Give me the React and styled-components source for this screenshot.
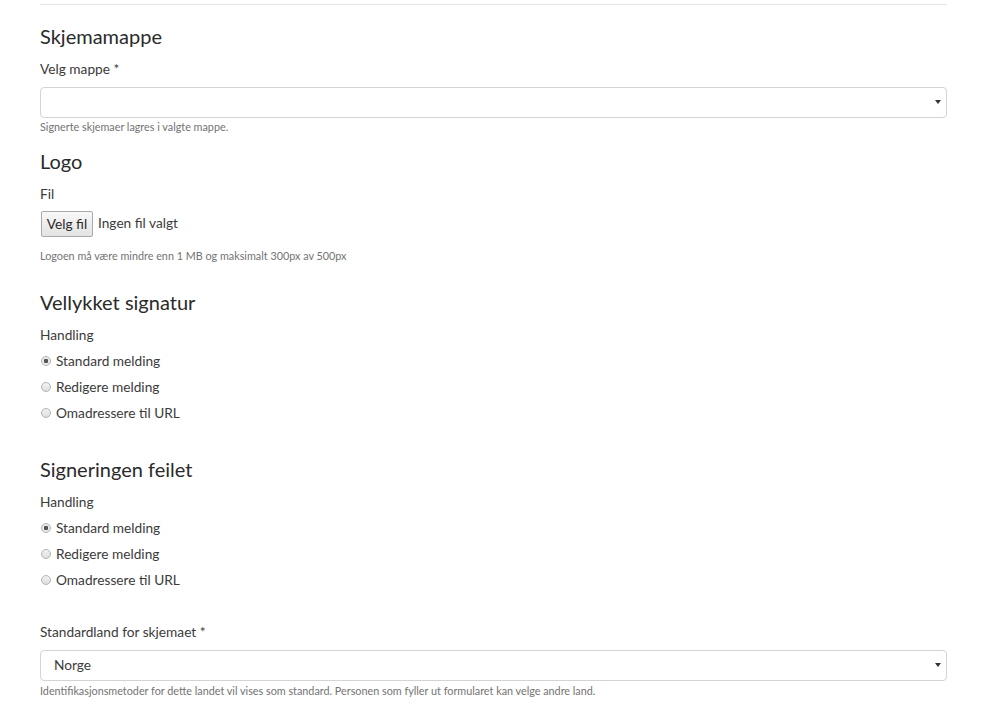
import React from 'react'
import styled, {createGlobalStyle} from 'styled-components'

const GlobalStyle = createGlobalStyle`
    body {
        margin: 0;
        background: #fff;
        font-family: Lato, "Open Sans", sans-serif;
        color: #3b3b3b;
    }
`

const Page = styled.div`
    margin: 0 52px 0 40px;
    padding-top: 4px;
`
const Rule = styled.hr`
    margin: 0;
    border: 0;
    border-top: 1px solid #e6e6e6;
`
const Section = styled.section`
    margin-top: ${props => props.top}px;
`
const Heading = styled.h2`
    margin: 0;
    padding-bottom: 2px;
    font-size: 20px;
    line-height: 22px;
    font-weight: 400;
    color: #2a2a2a;
`
const Label = styled.div`
    margin-top: ${props => props.top ?? 11}px;
    padding-bottom: 1px;
    font-size: 13.7px;
    line-height: 18px;
    color: #3b3b3b;
`
const SelectWrap = styled.div`
    position: relative;
    margin-top: 8px;
`
const Select = styled.div`
    box-sizing: border-box;
    height: 31px;
    border: 1px solid #d4d4d4;
    border-radius: 4px;
    padding: 0 13px;
    font-size: 13.7px;
    line-height: 28px;
    color: #3b3b3b;
`
const Arrow = styled.span`
    position: absolute;
    right: 6px;
    top: 13px;
    width: 0;
    height: 0;
    border-left: 3px solid transparent;
    border-right: 3px solid transparent;
    border-top: 4px solid #333;
`
const Help = styled.div`
    margin-top: ${props => props.top || 2}px;
    padding-bottom: 1px;
    font-size: 10.8px;
    line-height: 14px;
    color: #737373;
`
const FileRow = styled.div`
    display: flex;
    align-items: center;
    gap: 5px;
    height: 26px;
    margin-top: 7px;
    margin-left: 1px;
    font-size: 13.7px;
    line-height: 22px;
`
const FileButton = styled.button`
    box-sizing: border-box;
    height: 26px;
    width: 52px;
    padding: 0 0 2px;
    border: 1px solid #a9a9a9;
    border-radius: 2px;
    background: linear-gradient(#f8f8f8, #e3e3e3);
    font-family: inherit;
    font-size: 13.7px;
    color: #2a2a2a;
`
const Radios = styled.div`
    margin-top: 3px;
`
const RadioRow = styled.label`
    display: flex;
    align-items: center;
    height: 26px;
    font-size: 13.7px;
    line-height: 24px;
    color: #3b3b3b;
`
const Dot = styled.span`
    box-sizing: border-box;
    width: 10px;
    height: 10px;
    margin: 0 5px 0 1px;
    border-radius: 50%;
    border: 1px solid #b3b3b3;
    background: ${props => props.checked
        ? 'radial-gradient(circle, #555 0 2px, #e8e8e8 2.5px)'
        : 'linear-gradient(#f2f2f2, #dedede)'};
`
const InlineText = styled.span`
    padding-bottom: ${props => props.lift ?? 2}px;
`

const options = ['Standard melding', 'Redigere melding', 'Omadressere til URL']

const RadioGroup = () => (
    <Radios>
        {options.map((o, i) => (
            <RadioRow key={o}>
                <Dot checked={i === 0}/>
                <InlineText lift={0}>{o}</InlineText>
            </RadioRow>
        ))}
    </Radios>
)

export default function App() {
    return (
        <Page>
            <GlobalStyle/>
            <Rule/>
            <Section top={20}>
                <Heading>Skjemamappe</Heading>
                <Label>Velg mappe *</Label>
                <SelectWrap>
                    <Select>&nbsp;</Select>
                    <Arrow/>
                </SelectWrap>
                <Help>Signerte skjemaer lagres i valgte mappe.</Help>
            </Section>
            <Section top={15}>
                <Heading>Logo</Heading>
                <Label>Fil</Label>
                <FileRow>
                    <FileButton>Velg fil</FileButton>
                    <InlineText>Ingen fil valgt</InlineText>
                </FileRow>
                <Help top={12}>Logoen må være mindre enn 1 MB og maksimalt 300px av 500px</Help>
            </Section>
            <Section top={27}>
                <Heading>Vellykket signatur</Heading>
                <Label>Handling</Label>
                <RadioGroup/>
            </Section>
            <Section top={32}>
                <Heading>Signeringen feilet</Heading>
                <Label>Handling</Label>
                <RadioGroup/>
            </Section>
            <Section top={30}>
                <Label top={0}>Standardland for skjemaet *</Label>
                <SelectWrap>
                    <Select>Norge</Select>
                    <Arrow/>
                </SelectWrap>
                <Help top={3}>Identifikasjonsmetoder for dette landet vil vises som standard. Personen som fyller ut formularet kan velge andre land.</Help>
            </Section>
        </Page>
    )
}
